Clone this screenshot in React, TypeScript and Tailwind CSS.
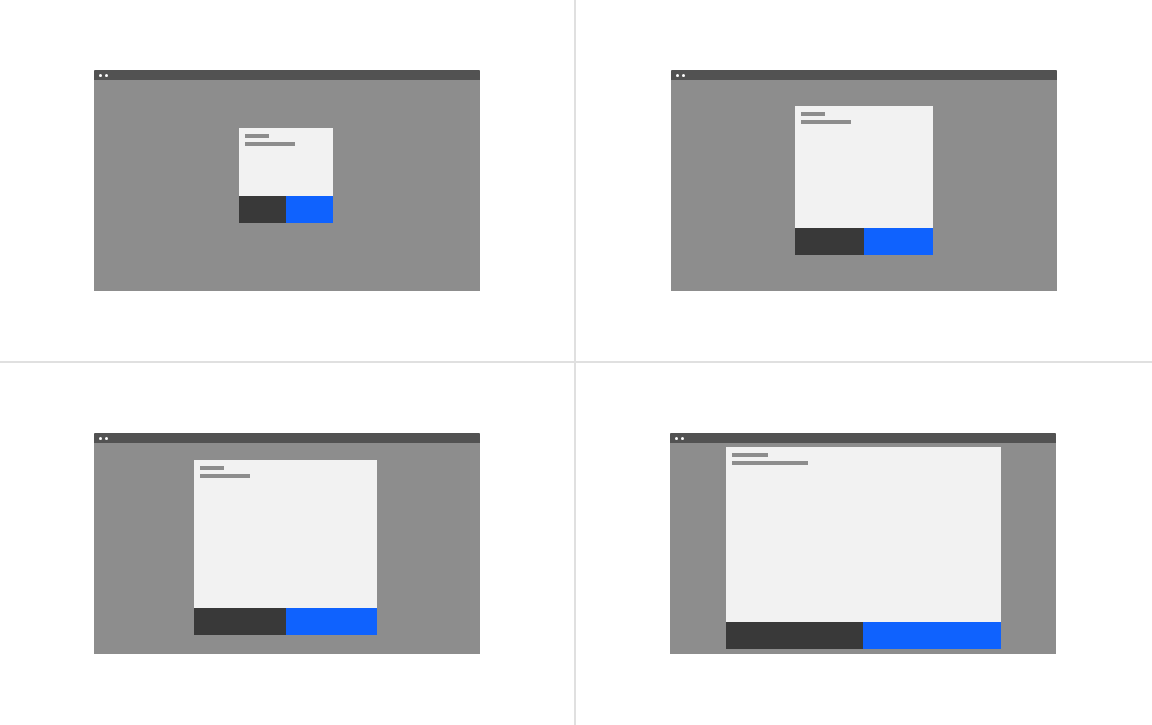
type Variant = {
  id: string;
  cell: string;
  dialog: string;
  body: string;
  offset: string;
  title: string;
  subtitle: string;
};

// Four breakpoints of the same modal, from narrow to wide
const variants: Variant[] = [
  { id: "xs", cell: "", dialog: "w-[94px] mr-[2px]", body: "h-[68px]", offset: "mt-[48px]", title: "w-[24px]", subtitle: "w-[50px]" },
  { id: "sm", cell: "", dialog: "w-[138px]", body: "h-[122px]", offset: "mt-[26px]", title: "w-[24px]", subtitle: "w-[50px]" },
  { id: "md", cell: "pb-[1px]", dialog: "w-[183px] mr-[3px]", body: "h-[148px]", offset: "mt-[17px]", title: "w-[24px]", subtitle: "w-[50px]" },
  { id: "lg", cell: "pb-[1px] pr-[2px]", dialog: "w-[275px]", body: "h-[175px]", offset: "mt-[4px]", title: "w-[36px]", subtitle: "w-[76px]" }
];

function BrowserFrame({ variant }: { variant: Variant }) {
  return (
    <div className="flex h-[221px] w-[386px] flex-col">
      <div className="flex h-[10px] items-center gap-[3px] rounded-t-[1px] bg-[#525252] pl-[5px]">
        <span className="size-[3px] rounded-full bg-white" />
        <span className="size-[3px] rounded-full bg-white" />
      </div>
      <div className="flex flex-1 flex-col items-center bg-[#8d8d8d]">
        <div className={`${variant.dialog} ${variant.offset} flex flex-col`}>
          <div className={`${variant.body} flex flex-col gap-[4px] bg-[#f2f2f2] p-[6px]`}>
            <span className={`${variant.title} h-[4px] bg-[#8d8d8d]`} />
            <span className={`${variant.subtitle} h-[4px] bg-[#8d8d8d]`} />
          </div>
          <div className="grid h-[27px] grid-cols-2">
            <span className="bg-[#393939]" />
            <span className="bg-[#0f62fe]" />
          </div>
        </div>
      </div>
    </div>
  );
}

export default function App() {
  return (
    <main className="grid h-[725px] w-[1152px] grid-cols-[574px_1fr] grid-rows-[361px_1fr] gap-[2px] bg-[#e0e0e0]">
      {variants.map((v) => (
        <section key={v.id} className={`${v.cell} flex items-center justify-center bg-white`}>
          <BrowserFrame variant={v} />
        </section>
      ))}
    </main>
  );
}
